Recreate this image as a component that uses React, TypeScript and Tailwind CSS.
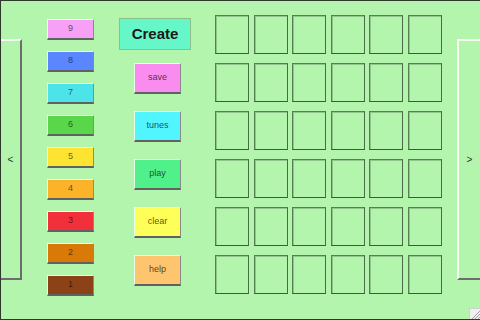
import React from "react";

const colorBtns = [
  { n: "9", c: "bg-[#f6a1f6]" },
  { n: "8", c: "bg-[#5a87ff]" },
  { n: "7", c: "bg-[#4ce4e8]" },
  { n: "6", c: "bg-[#5ad64a]" },
  { n: "5", c: "bg-[#fde432]" },
  { n: "4", c: "bg-[#fbb42a]" },
  { n: "3", c: "bg-[#f2303c]" },
  { n: "2", c: "bg-[#d97a08]" },
  { n: "1", c: "bg-[#8b4217]" },
];

const actions = [
  { t: "save", c: "bg-[#fa8cf0]" },
  { t: "tunes", c: "bg-[#50f5ff]" },
  { t: "play", c: "bg-[#50f08a]" },
  { t: "clear", c: "bg-[#ffff5a]" },
  { t: "help", c: "bg-[#ffc56e]" },
];

export default function App() {
  const cells = Array.from({ length: 36 });
  return (
    <div
      className="relative w-[480px] h-[320px] bg-[#b3f5ad] border-t border-l border-b border-[#2f3a2f] flex items-start overflow-hidden"
      style={{ fontFamily: '"Liberation Sans", Arial, sans-serif' }}
    >
      {/* left panel */}
      <div className="mt-[38px] w-[21px] h-[241px] border-t-2 border-t-[#f4fff2] border-r-2 border-r-[#6b6f6b] border-b-2 border-b-[#6b6f6b] flex items-center justify-center text-[10px] text-[#333]">
        &lt;
      </div>

      {/* color column */}
      <div className="ml-[25px] mt-[18px] flex flex-col gap-[11px]">
        {colorBtns.map((b) => (
          <div
            key={b.n}
            className={`${b.c} w-[47px] h-[21px] border-t border-l border-t-[#eaffea] border-l-[#eaffea] border-r border-r-[#8a8a8a] border-b-2 border-b-[#5f625f] flex items-center justify-center text-[9px] text-black/60`}
          >
            {b.n}
          </div>
        ))}
      </div>

      {/* action column */}
      <div className="ml-[25px] mt-[17px] flex flex-col items-start">
        <div className="w-[72px] h-[32px] bg-[#66f7c8] border border-[#8dbf88] flex items-center justify-center text-[15px] font-bold text-[#1a1a1a]">
          Create
        </div>
        <div className="mt-[13px] ml-[15px] flex flex-col gap-[17px]">
          {actions.map((a) => (
            <div
              key={a.t}
              className={`${a.c} w-[47px] h-[31px] border-t border-l border-t-[#eaffea] border-l-[#eaffea] border-r border-r-[#8a8a8a] border-b-2 border-b-[#5f625f] flex items-center justify-center text-[9px] text-black/70`}
            >
              {a.t}
            </div>
          ))}
        </div>
      </div>

      {/* grid */}
      <div className="ml-[24px] mt-[14px] grid grid-cols-[repeat(6,34px)] gap-x-[4.5px] gap-y-[9px]">
        {cells.map((_, i) => (
          <div
            key={i}
            className="w-[34px] h-[39px] border border-[#55804f] border-b-[#3d5c3a] border-r-[#486c45] shadow-[inset_1px_1px_0_#8fc48a]"
          />
        ))}
      </div>

      {/* right panel */}
      <div className="ml-auto mt-[38px] w-[23px] h-[241px] border-t-2 border-t-[#f4fff2] border-l-2 border-l-[#f4fff2] border-b-2 border-b-[#6b6f6b] flex items-center justify-center text-[10px] text-[#333]">
        &gt;
      </div>

      {/* resize grip */}
      <div className="absolute right-0 bottom-0 w-[11px] h-[11px] bg-[#f0f0f0] border-t border-l border-[#d0d0d0]">
        <svg width="11" height="11" viewBox="0 0 11 11">
          <line x1="10" y1="2" x2="2" y2="10" stroke="#a0a0a0" strokeWidth="1" />
          <line x1="10" y1="5" x2="5" y2="10" stroke="#a0a0a0" strokeWidth="1" />
          <line x1="10" y1="8" x2="8" y2="10" stroke="#a0a0a0" strokeWidth="1" />
        </svg>
      </div>
    </div>
  );
}
